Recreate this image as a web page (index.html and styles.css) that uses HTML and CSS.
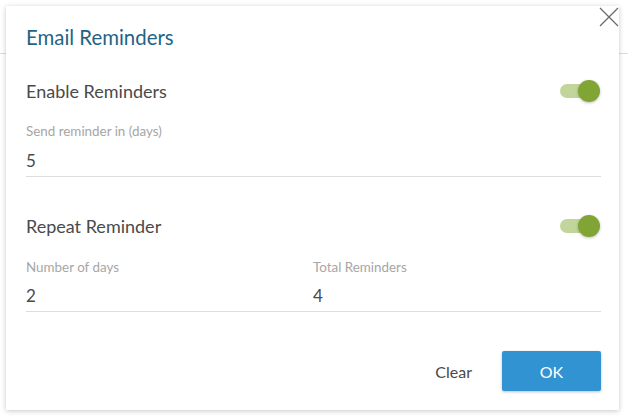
FILE: index.html
```html
<!DOCTYPE html>
<html>

<head>
    <meta charset="UTF-8">
    <title>Email Reminders</title>
    <link rel="stylesheet" href="styles.css">
</head>

<body>
    <div class="page-header"></div>

    <div class="dialog">
        <button class="close-btn" aria-label="Close">
            <svg width="20" height="20" viewBox="0 0 20 20">
                <path d="M1 1 L19 19 M19 1 L1 19" stroke="#6b6b6b" stroke-width="1.3" fill="none"/>
            </svg>
        </button>

        <h2 class="dialog-title">Email Reminders</h2>

        <div class="switch-row">
            <span class="switch-label">Enable Reminders</span>
            <span class="toggle on"><span class="toggle-track"></span><span class="toggle-knob"></span></span>
        </div>

        <div class="field field-first">
            <label>Send reminder in (days)</label>
            <div class="field-value">5</div>
        </div>

        <div class="switch-row switch-row-second">
            <span class="switch-label">Repeat Reminder</span>
            <span class="toggle on"><span class="toggle-track"></span><span class="toggle-knob"></span></span>
        </div>

        <div class="field-pair">
            <div class="field">
                <label>Number of days</label>
                <div class="field-value">2</div>
            </div>
            <div class="field">
                <label>Total Reminders</label>
                <div class="field-value">4</div>
            </div>
        </div>

        <div class="dialog-actions">
            <button class="btn-flat">Clear</button>
            <button class="btn-primary">OK</button>
        </div>
    </div>
</body>

</html>
```

FILE: styles.css
```css
body {
    margin: 0;
    background: #fff;
    font-family: Lato, "Open Sans", sans-serif;
    color: #4a4a4a;
}

.page-header {
    height: 53px;
    border-bottom: 1px solid #ddd;
}

.dialog {
    position: absolute;
    top: 6px;
    left: 6px;
    width: 613px;
    height: 404px;
    box-sizing: border-box;
    padding: 19px 18px 0 20px;
    background: #fff;
    box-shadow: 0 1px 5px rgba(0, 0, 0, 0.22);
    display: flex;
    flex-direction: column;
}

.close-btn {
    position: absolute;
    top: 1px;
    right: 0;
    padding: 0;
    border: none;
    background: none;
    cursor: pointer;
}

.close-btn svg {
    display: block;
}

.dialog-title {
    margin: 0;
    font-size: 20.4px;
    font-weight: normal;
    line-height: 24px;
    color: #1f6485;
}

.switch-row {
    display: flex;
    align-items: center;
    justify-content: space-between;
    height: 24px;
    margin-top: 30px;
}

.switch-row-second {
    margin-top: 37px;
}

.switch-label {
    font-size: 18px;
    color: #4a4a4a;
}

.toggle {
    position: relative;
    width: 40px;
    height: 22px;
    margin-right: 1px;
}

.toggle-track {
    position: absolute;
    left: 0;
    top: 4px;
    width: 32px;
    height: 14px;
    border-radius: 7px;
    background: #c2d59b;
}

.toggle-knob {
    position: absolute;
    right: 0;
    top: 0;
    width: 22px;
    height: 22px;
    border-radius: 50%;
    background: #80a535;
    box-shadow: 0 1px 3px rgba(0, 0, 0, 0.25);
}

.field {
    display: flex;
    flex-direction: column;
}

.field-first {
    margin-top: 20px;
}

.field label {
    font-size: 13.4px;
    line-height: 16px;
    color: #a6a6a6;
}

.field-value {
    margin-top: 6px;
    font-size: 17px;
    line-height: 31px;
    color: #4a4a4a;
    border-bottom: 1px solid #ddd;
}

.field-pair {
    display: grid;
    grid-template-columns: 287px 1fr;
    margin-top: 21px;
}

.field-pair .field-value {
    margin-top: 5px;
}

.dialog-actions {
    display: flex;
    justify-content: flex-end;
    align-items: center;
    gap: 15px;
    margin-top: 39px;
}

.btn-flat {
    height: 40px;
    padding: 0 15px;
    border: none;
    background: none;
    font-family: inherit;
    font-size: 16px;
    color: #4a4a4a;
    cursor: pointer;
}

.btn-primary {
    width: 99px;
    height: 40px;
    border: none;
    border-radius: 2px;
    background: #3193d1;
    color: #fff;
    font-family: inherit;
    font-size: 16px;
    box-shadow: 0 1px 3px rgba(0, 0, 0, 0.25);
    cursor: pointer;
}
```
